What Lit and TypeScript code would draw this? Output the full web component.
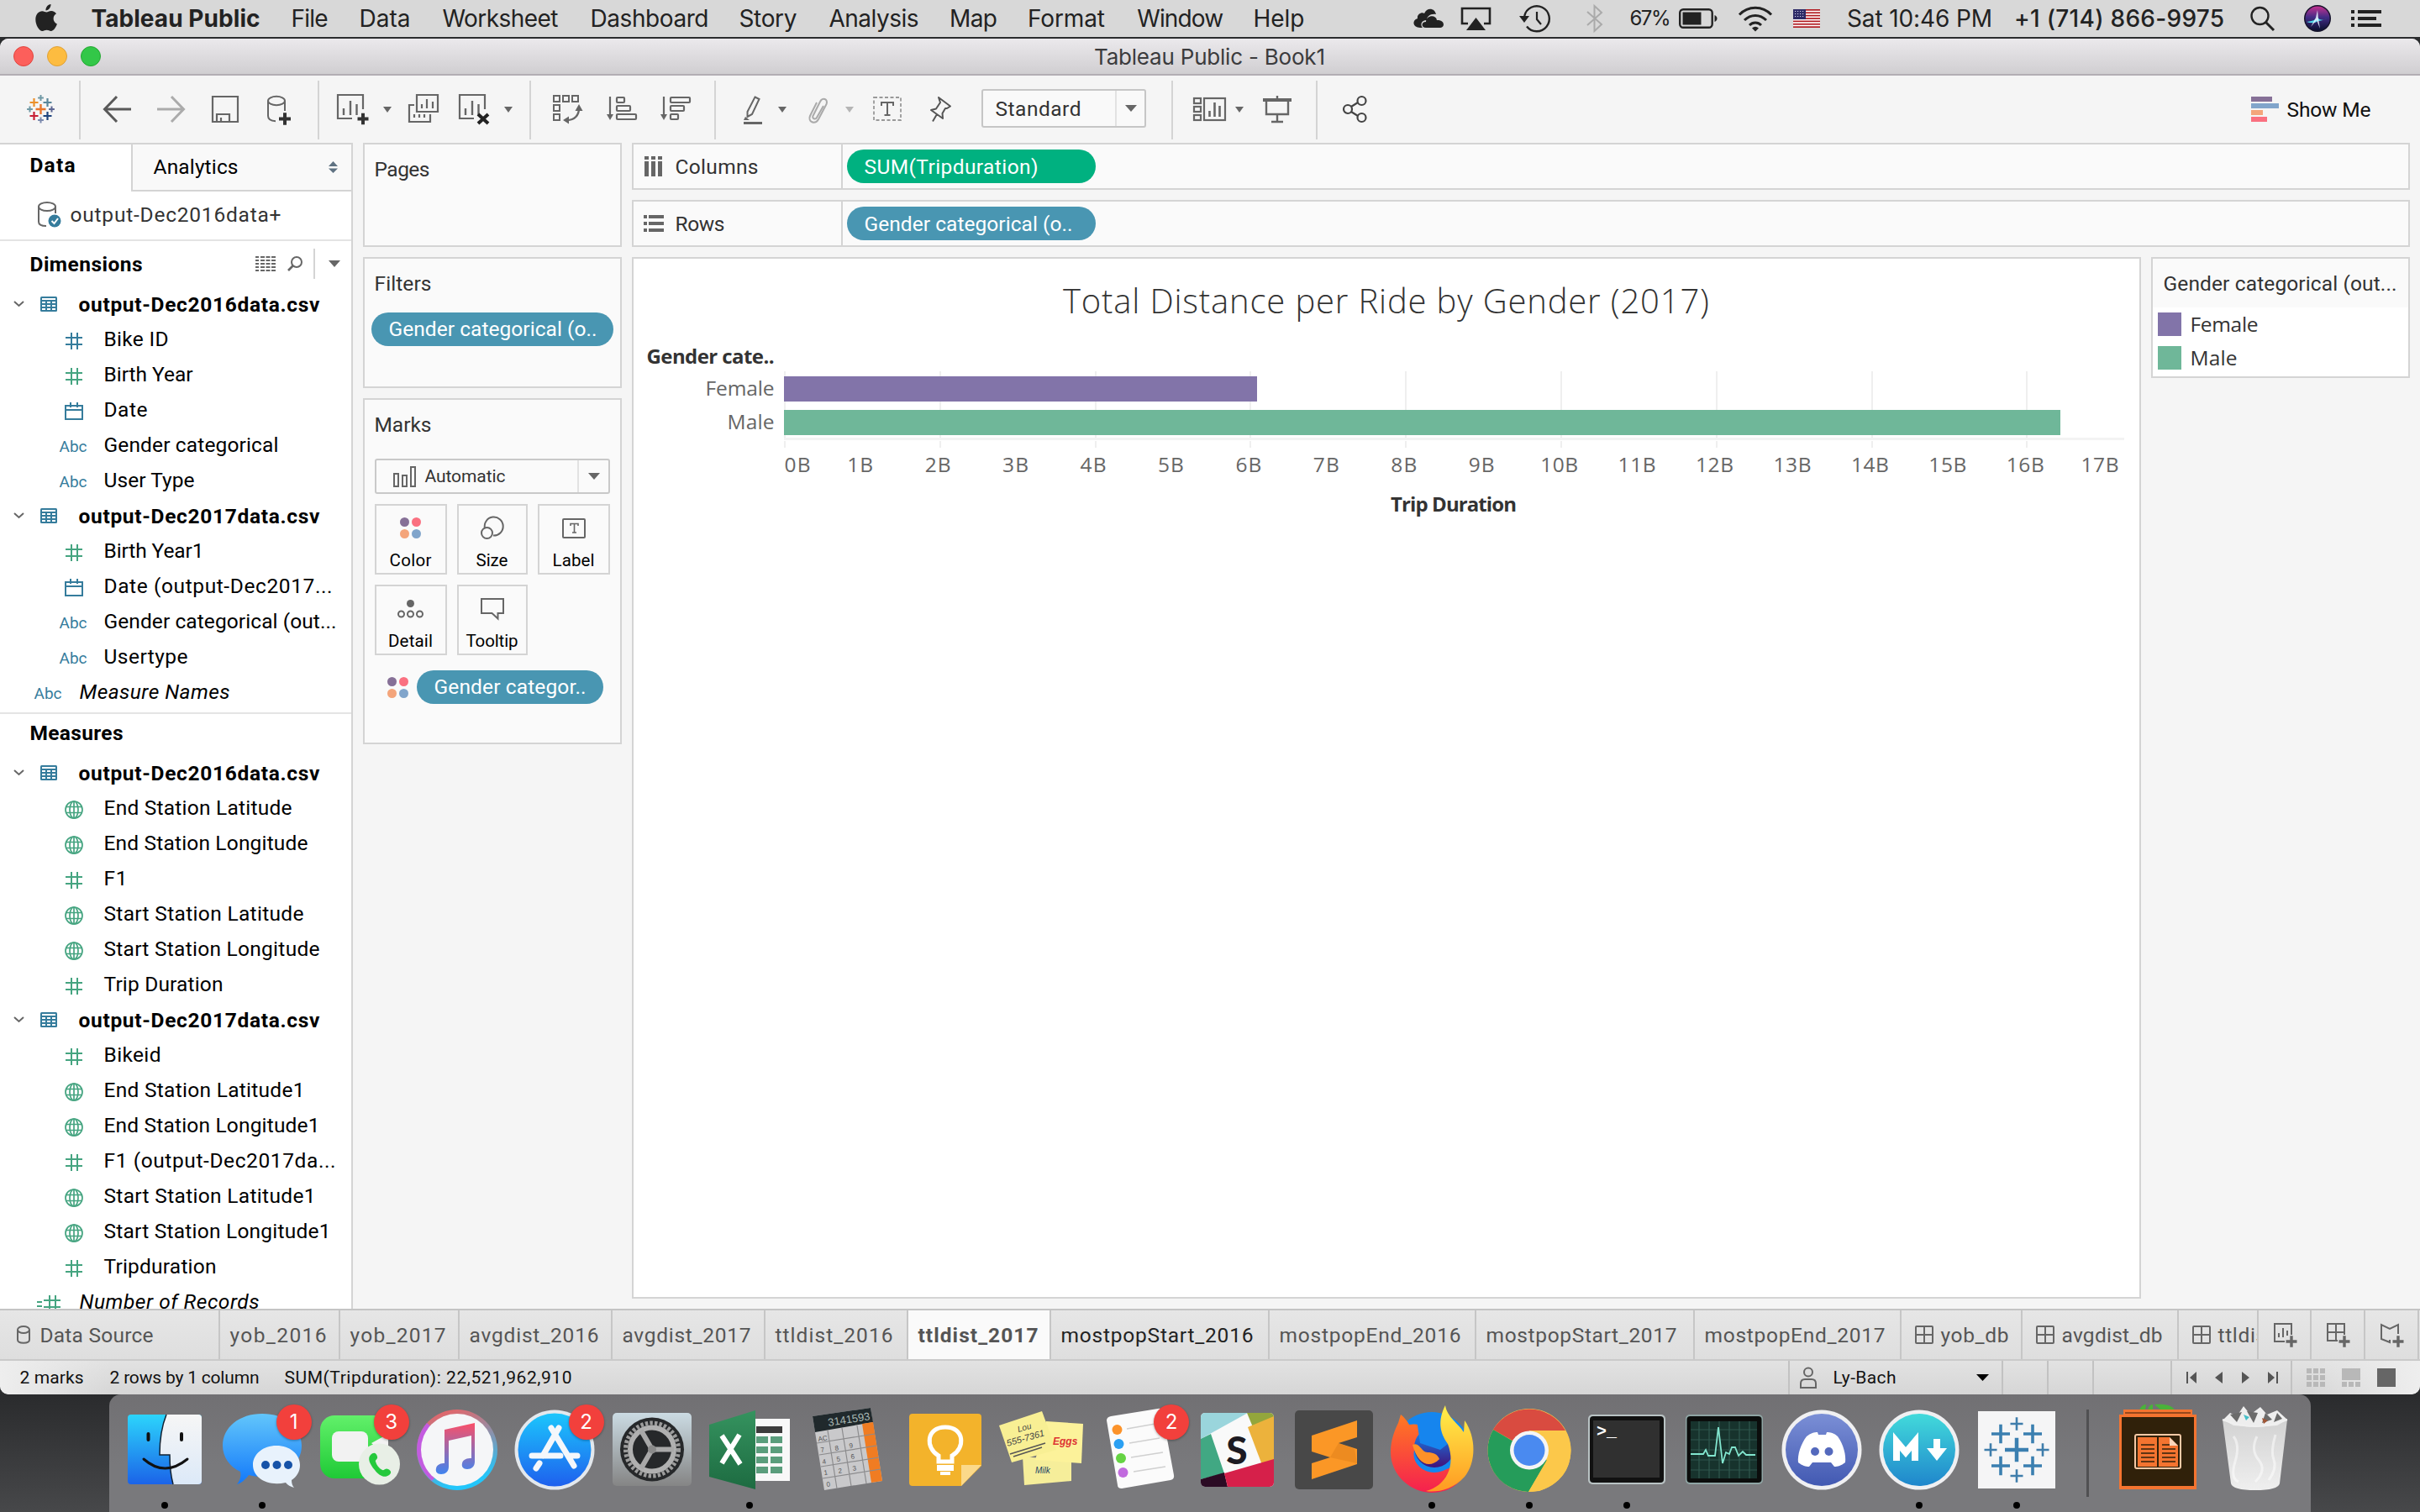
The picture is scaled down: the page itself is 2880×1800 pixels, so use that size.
import { LitElement, html, css, svg, unsafeCSS, nothing } from "lit";
import type { TemplateResult, SVGTemplateResult } from "lit";
import { customElement, property } from "lit/decorators.js";
import { classMap } from "lit/directives/class-map.js";
import { styleMap } from "lit/directives/style-map.js";

/** Grid tracks from a list of column starts; the last column takes the rest. */
const tracks = (...starts: number[]) =>
  unsafeCSS(
    starts
      .slice(1)
      .map((s, i) => `${+(s - starts[i]).toFixed(1)}px`)
      .join(" ") + " 1fr"
  );

/** One line of text, tracked so that it fills a known width. */
@customElement("fit-text")
class FitText extends LitElement {
  @property() text = "";
  @property({ type: Number }) w = 0;
  static styles = css`
    :host { display: inline-block; white-space: pre; margin: 0 0.5px 0 -0.5px; }
    span { display: inline-block; }
  `;
  updated() {
    const span = this.renderRoot.querySelector("span") as HTMLElement;
    span.style.letterSpacing = "0";
    if (!this.w || this.text.length < 2) return;
    const gap = (this.w + 2 - span.getBoundingClientRect().width) / (this.text.length - 1);
    span.style.letterSpacing = `${gap.toFixed(3)}px`;
    span.style.marginRight = `${(-gap).toFixed(3)}px`;
  }
  render() {
    return html`<span>${this.text}</span>`;
  }
}

const t = (text: string, w = 0) => html`<fit-text .text=${text} .w=${w}></fit-text>`;

const ic = (w: number, h: number, body: SVGTemplateResult | SVGTemplateResult[]) =>
  html`<svg width=${w} height=${h} viewBox="0 0 ${w} ${h}">${body}</svg>`;

const caret = (w: number, h: number, fill = "#666") =>
  ic(w, h, svg`<path d="M0 0H${w}L${w / 2} ${h}Z" fill=${fill}/>`);

const base = css`
  :host { display: block; box-sizing: border-box; }
  * { box-sizing: border-box; }
  svg { display: block; overflow: visible; flex: none; }
`;

/* ---------------------------------------------------------------- menu bar */

@customElement("mac-menubar")
class MacMenubar extends LitElement {
  static styles = [
    base,
    css`
      :host {
        height: 44px; background: #d8d8d8; padding-left: 42px; color: #222;
        display: grid; align-items: center;
        grid-template-columns: ${tracks(42, 109, 347, 428, 527, 703, 880, 987, 1130.5, 1223.5, 1353.7, 1492, 1682, 1738, 1808, 1888, 1940, 1998, 2068, 2134, 2198.5, 2397.6, 2678, 2742, 2798)};
        font: 28px/44px Inter, Roboto, sans-serif;
      }
      .app { font-weight: 700; }
      .pct { font-size: 24px; }
      .user { font-weight: 500; }
    `,
  ];
  render() {
    const menus: [string, number][] = [
      ["File", 42], ["Data", 59], ["Worksheet", 136], ["Dashboard", 139], ["Story", 67],
      ["Analysis", 105], ["Map", 55], ["Format", 90], ["Window", 101], ["Help", 59],
    ];
    return html`
      ${ic(26, 36, svg`<path fill="#222" d="M18.5 1c.3 3.300-2.400 7.300-6 7.500C12 5 15 1.300 18.500 1ZM13.300 10.500c1.600 0 3-1.500 5.800-1.500 2.400 0 4.700 1.400 5.900 3.300-5 3-4.200 10 .9 12.200-1 3.200-4 8.500-7.200 8.500-2 0-2.700-1.200-5.100-1.200S10.300 33 8.500 33C4.500 33 .3 25.500.3 19.200c0-6.400 4-10 7.900-10 2.200 0 3.800 1.300 5.100 1.300Z"/>`)}
      <span class="app">${t("Tableau Public", 199)}</span>
      ${menus.map(([m, w]) => html`<span>${t(m, w)}</span>`)}
      ${ic(36, 24, svg`<path fill="#222" d="M8 23c-9 0-10-9-3-11C4 6 11 4 13 6c3-7 12-7 14 1-7-1-11 3-11 7-7 0-8 6-5 9Z"/><path fill="#222" d="M15 23c-6 0-6-7 0-7 0-8 12-9 13-2 9-1 11 9 3 9Z"/>`)}
      ${ic(37, 30, svg`<path d="M9 21H2V3h33v18h-7" fill="none" stroke="#222" stroke-width="2.600"/><path d="M18.500 14 30 29H7Z" fill="#222"/>`)}
      ${ic(38, 34, svg`<path d="M6.200 14A15 15 0 1 1 9 26.500" fill="none" stroke="#222" stroke-width="2.400"/><path d="M0 14h12l-6 8Z" fill="#222"/><path d="M21 9v9l5 6" fill="none" stroke="#222" stroke-width="2.200"/>`)}
      ${ic(20, 32, svg`<path d="M1 8l17 15-8.500 8V1L18 9 1 24" fill="none" stroke="#aaa" stroke-width="2"/>`)}
      <span class="pct">${t("67%", 47)}</span>
      ${ic(47, 24, svg`<rect x="1.200" y="1.200" width="38.500" height="21.500" rx="4" fill="none" stroke="#222" stroke-width="2.400"/><rect x="4.500" y="4.500" width="22" height="15" fill="#222"/><path d="M42.500 8c4 1.500 4 6.500 0 8Z" fill="#222"/>`)}
      ${ic(42, 30, svg`<g fill="none" stroke="#222" stroke-width="3"><path d="M2 10.500c10.500-11 27.500-11 38 0"/><path d="M8 17c7.500-7.500 18.500-7.500 26 0"/><path d="M14 23c4-4 10-4 14 0"/></g><path d="M17 26.500q4-3.500 8 0l-4 4Z" fill="#222"/>`)}
      ${ic(32, 22, svg`<rect width="32" height="22" fill="#fff"/>${[0, 1, 2, 3, 4, 5, 6].map((i) => svg`<rect y=${i * 3.38} width="32" height="1.700" fill="#b01a20"/>`)}<rect width="15" height="12" fill="#2c2a66"/>${[2, 5, 8].map((y) => svg`<path d="M2 ${y + 0.5}H14" stroke="#cfd0e8" stroke-width="1.200" stroke-dasharray="1.200 1.800"/>`)}`)}
      <span>${t("Sat 10:46 PM", 171)}</span>
      <span class="user">${t("+1 (714) 866-9975", 248)}</span>
      ${ic(30, 30, svg`<circle cx="11.500" cy="12" r="10" fill="none" stroke="#222" stroke-width="2.400"/><path d="M18.500 19.500 28 29" stroke="#222" stroke-width="3"/>`)}
      ${ic(32, 32, svg`<defs><linearGradient id="si" x1="0" y1="0" x2="0" y2="1"><stop offset="0" stop-color="#c4318f"/><stop offset=".45" stop-color="#432c86"/><stop offset="1" stop-color="#0a1030"/></linearGradient></defs><circle cx="16" cy="16" r="16" fill="#15122a"/><circle cx="16" cy="16" r="14.500" fill="url(#si)"/><path d="M3 20q10-1 13-5 4 5 12 1-8 3-11 3-6 4-14 1Z" fill="#4fd8ea"/><path d="M16 6l1 10 2 12-4-10-7 8 6-11Z" fill="#e9f6ff" opacity=".85"/>`)}
      ${ic(36, 20, svg`<g fill="#222"><path d="M0 0h4v4H0zM8 0h28v4H8zM0 8h4v4H0zM8 8h22v4H8zM0 16h4v4H0zM8 16h28v4H8z"/></g>`)}
    `;
  }
}

/* ----------------------------------------------------------------- toolbar */

const plus = (x: number, y: number, s: number, c: string, k = 2) =>
  svg`<path d="M${x - s} ${y}h${2 * s}M${x} ${y - s * 1.02}v${2 * s * 1.02}" stroke=${c} stroke-width=${k} fill="none"/>`;

const sheet = svg`<path d="M31 18V1H1v28h17" fill="none" stroke="#666" stroke-width="2.200"/><path d="M8 25v-8M16 25V8M23.500 25v-13" stroke="#666" stroke-width="2.400"/>`;

@customElement("tool-bar")
class ToolBar extends LitElement {
  static styles = [
    base,
    css`
      :host {
        height: 80px; background: #f5f5f5; padding-left: 32px;
        display: grid; align-items: center;
        grid-template-columns: ${tracks(32, 94, 122, 187, 252, 318, 378, 401, 456, 486, 546, 600, 630, 658, 722, 786, 850, 885, 926, 961, 1006, 1039, 1106, 1168, 1394, 1420, 1470, 1503, 1566, 1598, 2679)};
        font: 24.500px Roboto, sans-serif; color: #333;
      }
      .sep { width: 2px; height: 70px; background: #d4d4d4; margin-top: 2px; }
      .select { width: 196px; height: 46px; border: 2px solid #c6c6c6; border-radius: 3px; background: #f9f9f9; display: flex; align-items: center; justify-content: space-between; padding-left: 15px; margin-top: -2px; }
      .arrow { width: 35px; height: 42px; border-left: 2px solid #e2e2e2; display: grid; place-items: center; }
      .show { display: flex; align-items: center; gap: 10px; color: #111; }
    `,
  ];
  render() {
    const sep = html`<i class="sep"></i>`;
    const c = caret(10, 7);
    return html`
      ${ic(33, 36, [
        plus(16.5, 18, 6, "#e8762c", 2.4), plus(8.5, 10, 5, "#eb912c", 2.2), plus(24.5, 10, 5, "#59879b", 2.2),
        plus(8.5, 26, 5, "#c72035", 2.2), plus(24.5, 26, 5, "#1f457e", 2.2), plus(16.5, 4.5, 3.4, "#7099a5"),
        plus(16.5, 31, 3.4, "#7b89ad"), plus(3.5, 18, 3.4, "#7099a5"), plus(29.5, 18, 3.4, "#5c6692"),
      ])}
      ${sep}
      ${ic(34, 36, svg`<path d="M17 3 2.500 18 17 33M3 18h31" fill="none" stroke="#595959" stroke-width="3"/>`)}
      ${ic(34, 36, svg`<path d="M17 3 31.500 18 17 33M0 18h31" fill="none" stroke="#ababab" stroke-width="3"/>`)}
      ${ic(32, 36, svg`<path d="M1 3h30v30H1Z M6 33V24h15v9M11 33v-5" fill="none" stroke="#666" stroke-width="2.200"/>`)}
      ${ic(28, 36, svg`<g fill="none" stroke="#666" stroke-width="2"><ellipse cx="11" cy="8" rx="10" ry="5.200"/><path d="M1 8v18c0 4 4 6 9 6.300M21 8v12"/></g>${plus(21, 29.500, 7, "#333", 4)}`)}
      ${sep}
      ${ic(38, 36, svg`${sheet}${plus(31, 29.500, 6.500, "#333", 4)}`)}
      ${c}
      ${ic(37, 36, svg`<g fill="none" stroke="#666" stroke-width="2.200"><path d="M10 1h25v20H10zM7 13H1v20h25v-9"/><path d="M16 17v-5M22 17V6M29 17V9M7 28v-4M13 28v-4M19 28v-4"/></g>`)}
      ${ic(38, 36, svg`${sheet}<path d="M23 24l12 11M35 24 23 35" stroke="#222" stroke-width="4"/>`)}
      ${c}
      ${sep}
      ${ic(35, 36, svg`<g fill="none" stroke="#666" stroke-width="2"><rect x="1" y="2" width="7" height="7"/><rect x="12" y="2" width="7" height="7"/><rect x="23" y="2" width="7" height="7"/><rect x="1" y="13" width="7" height="7"/><rect x="1" y="24" width="7" height="7"/><path d="M17 31c9 0 14-6 14-14" stroke-width="2.400"/></g><path d="M31 12l4.500 8h-9zM12 31l7-4.500v9z" fill="#666"/>`)}
      ${ic(36, 36, svg`<g fill="none" stroke="#666" stroke-width="2.200"><path d="M4 3v24"/><rect x="12" y="4" width="9" height="6" rx="1"/><rect x="12" y="14" width="16" height="6" rx="1"/><rect x="12" y="24" width="23" height="6" rx="1"/></g><path d="M0 24h8l-4 7z" fill="#666"/>`)}
      ${ic(36, 36, svg`<g fill="none" stroke="#666" stroke-width="2.200"><path d="M4 3v24"/><rect x="12" y="4" width="23" height="6" rx="1"/><rect x="12" y="14" width="16" height="6" rx="1"/><rect x="12" y="24" width="9" height="6" rx="1"/></g><path d="M0 24h8l-4 7z" fill="#666"/>`)}
      ${sep}
      ${ic(22, 36, svg`<path d="M13.500 3.500 18.500 6 10 24l-5.500 3V21Z" fill="none" stroke="#666" stroke-width="2"/><path d="M2 27l5 4H0z" fill="#666"/><path d="M0 34.500h22" stroke="#666" stroke-width="3"/>`)}
      ${c}
      ${ic(24, 36, svg`<path d="M19 13 11 27c-1.500 3-6 1-4.500-2L15 8c2.500-6 10-3 7.500 3L13 29c-4 7-13 3-10-4L11 9" fill="none" stroke="#aaa" stroke-width="2" transform="translate(0 1)"/>`)}
      ${caret(10, 7, "#b5b5b5")}
      ${ic(34, 36, svg`<rect x="1" y="4" width="32" height="27" fill="none" stroke="#999" stroke-width="1.800" stroke-dasharray="4 2.500"/><path d="M10 14v-4h14v4M17 10v15M13.500 25h7" fill="none" stroke="#666" stroke-width="2"/>`)}
      ${ic(26, 36, svg`<path d="M11 4 25 14.500 21 17l-2 0-3.500 6 .5 6L2 19l6-1.500 5-7.500ZM9 24 4 32.500" fill="none" stroke="#555" stroke-width="2" stroke-linejoin="round"/>`)}
      <div class="select">${t("Standard", 100)}<span class="arrow">${caret(14, 8)}</span></div>
      ${sep}
      ${ic(39, 36, svg`<g fill="none" stroke="#666" stroke-width="2.200"><rect x="1" y="5" width="8" height="6"/><rect x="1" y="15" width="8" height="6"/><rect x="1" y="25" width="8" height="6"/><rect x="13" y="5" width="25" height="26"/><path d="M19.500 27v-7M25.500 27V10M31.500 27V14" stroke-width="2.600"/></g>`)}
      ${c}
      ${ic(34, 36, svg`<path d="M0 5h34v4H0z" fill="#666"/><path d="M4 8v16h26V8M17 2v3M17 24v9M10 33h14" fill="none" stroke="#666" stroke-width="2.400"/>`)}
      ${sep}
      ${ic(29, 36, svg`<g fill="none" stroke="#444" stroke-width="2.200"><circle cx="6" cy="18" r="5"/><circle cx="22.500" cy="8" r="5"/><circle cx="22.500" cy="28" r="5"/><path d="M10 15l8-5M10 21l8 5"/></g>`)}
      <div class="show">
        ${ic(33, 30, svg`<path d="M0 0h25v6H0z" fill="#867097"/><path d="M0 8h33v6H0z" fill="#81a5cb"/><path d="M0 16h14v6H0z" fill="#f4a57b"/><path d="M0 24h19v6H0z" fill="#fa7080"/>`)}
        ${t("Show Me", 98)}
      </div>
    `;
  }
}

/* --------------------------------------------------------------- data pane */

type Kind = "dim" | "num" | "date" | "abc" | "geo" | "calc" | "table";
interface Field { kind: Kind; name: string; w: number; top?: boolean }
const f = (kind: Kind, name: string, w: number, top = false): Field => ({ kind, name, w, top });

const dimensions: Field[] = [
  f("table", "output-Dec2016data.csv", 285), f("dim", "Bike ID", 75), f("num", "Birth Year", 104),
  f("date", "Date", 50), f("abc", "Gender categorical", 206), f("abc", "User Type", 106),
  f("table", "output-Dec2017data.csv", 285), f("num", "Birth Year1", 117),
  f("date", "Date (output-Dec2017...", 270), f("abc", "Gender categorical (out...", 275),
  f("abc", "Usertype", 98), f("abc", "Measure Names", 177, true),
];
const measures: Field[] = [
  f("table", "output-Dec2016data.csv", 285), f("geo", "End Station Latitude", 222),
  f("geo", "End Station Longitude", 241), f("num", "F1", 26), f("geo", "Start Station Latitude", 236),
  f("geo", "Start Station Longitude", 255), f("num", "Trip Duration", 140),
  f("table", "output-Dec2017data.csv", 285), f("num", "Bikeid", 66), f("geo", "End Station Latitude1", 237),
  f("geo", "End Station Longitude1", 255), f("num", "F1 (output-Dec2017da...", 274),
  f("geo", "Start Station Latitude1", 250), f("geo", "Start Station Longitude1", 268),
  f("num", "Tripduration", 132), f("calc", "Number of Records", 212, true),
];

const hash = (c: string) => svg`<path d="M0 6h20M0 14h20M7 0v20M14 0v20" fill="none" stroke=${c} stroke-width="2"/>`;
const fieldIcon = (k: Kind): TemplateResult => {
  const blue = "#357c9c", green = "#45a480";
  if (k === "dim") return ic(20, 20, hash(blue));
  if (k === "num") return ic(20, 20, hash(green));
  if (k === "calc") return ic(28, 20, svg`<path d="M0 8h6M0 13h6" stroke=${green} stroke-width="2"/><g transform="translate(8 0)">${hash(green)}</g>`);
  if (k === "date") return ic(22, 21, svg`<path d="M1 4h20v16H1ZM1 9h20M7 0v6M15 0v6" fill="none" stroke=${blue} stroke-width="2"/>`);
  if (k === "geo") return ic(22, 22, svg`<g fill="none" stroke=${green} stroke-width="1.700"><circle cx="11" cy="11" r="10"/><ellipse cx="11" cy="11" rx="5" ry="10"/><path d="M1.500 7.500h19M1.500 14.500h19M11 1v20"/></g>`);
  if (k === "table") return ic(20, 18, svg`<rect width="20" height="18" rx="1.500" fill=${blue}/><g fill="#fff"><path d="M2 2h16v2H2z"/>${[6, 10, 14].map((y) => svg`<path d="M2 ${y}h4v2H2zM8 ${y}h4v2H8zM14 ${y}h4v2h-4z"/>`)}</g>`);
  return html`<span class="abc">${t("Abc", 31)}</span>`;
};

@customElement("data-pane")
class DataPane extends LitElement {
  static styles = [
    base,
    css`
      :host { width: 420px; height: 1388px; overflow: hidden; border-right: 2px solid #d4d4d4; border-top: 2px solid #d4d4d4; background: #fff; font: 24.500px Roboto, sans-serif; color: #000; }
      .tabs { display: flex; height: 56px; }
      .tab { width: 156px; padding: 10px 0 0 36px; font-weight: 700; }
      .tab.off { flex: 1; font-weight: 400; background: #f9f9f9; border-left: 2px solid #d4d4d4; border-bottom: 2px solid #d4d4d4; padding: 0 16px 1px 25px; display: flex; align-items: center; justify-content: space-between; }
      .source { height: 59px; display: flex; align-items: center; padding-left: 45px; gap: 11px; color: #333; border-bottom: 2px solid #e4e4e4; padding-bottom: 3px; }
      .head { height: 54px; display: flex; align-items: center; padding: 0 13px 0 36px; font-weight: 700; }
      .tools { margin-left: auto; display: flex; align-items: center; gap: 14px; }
      .bar { width: 2px; height: 36px; background: #d4d4d4; margin: 0 2px 0 -1px; }
      .rule { height: 2px; background: #e4e4e4; margin-top: 3px; }
      .head.low { height: 49px; padding-bottom: 4px; }
      .row { height: 42px; display: grid; grid-template-columns: 124px 1fr; align-items: center; }
      .row.table { grid-template-columns: 16px 32px 46px 1fr; font-weight: 700; }
      .row.top { grid-template-columns: 95px 1fr; font-style: italic; }
      .glyph { display: flex; justify-content: center; padding-left: 51px; padding-top: 3px; }
      .row.top .glyph { padding-left: 20px; font-style: normal; }
      .abc { font-size: 19px; color: #357c9c; line-height: 20px; }
      .row > fit-text { padding-bottom: 1px; }
      .row.table > fit-text { padding-bottom: 0; }
    `,
  ];
  private row = (x: Field) =>
    x.kind === "table"
      ? html`<div class="row table"><span></span>${ic(13, 8, svg`<path d="M1 1l5.500 5L12 1" fill="none" stroke="#666" stroke-width="2"/>`)}${fieldIcon("table")}${t(x.name, x.w)}</div>`
      : html`<div class=${classMap({ row: true, top: !!x.top })}><span class="glyph">${fieldIcon(x.kind)}</span>${t(x.name, x.w)}</div>`;
  render() {
    return html`
      <div class="tabs">
        <div class="tab">${t("Data", 52)}</div>
        <div class="tab off">${t("Analytics", 99)}${ic(11, 14, svg`<path d="M0 6 5.500 0 11 6zM0 8.500h11L5.500 14z" fill="#5f7282"/>`)}</div>
      </div>
      <div class="source">
        ${ic(28, 30, svg`<g fill="none" stroke="#666" stroke-width="2"><ellipse cx="11" cy="6" rx="10" ry="5"/><path d="M1 6v18c0 4 4 5 9 5M21 6v8"/></g><circle cx="20" cy="23" r="7.500" fill="#357c9c"/><path d="M16.500 23l3 3 4.500-6" fill="none" stroke="#fff" stroke-width="2"/>`)}
        ${t("output-Dec2016data+", 249)}
      </div>
      <div class="head">
        ${t("Dimensions", 132)}
        <span class="tools">
          ${ic(24, 18, [1, 5, 9, 13, 17].map((y) => svg`<path d="M0 ${y}h4M6 ${y}h5M12.500 ${y}h5M19 ${y}h5" stroke="#666" stroke-width="1.900"/>`))}
          ${ic(18, 18, svg`<circle cx="11" cy="7" r="6" fill="none" stroke="#666" stroke-width="2"/><path d="M7 11l-6 6" stroke="#666" stroke-width="2.600"/>`)}
          <i class="bar"></i>${caret(14, 8)}
        </span>
      </div>
      ${dimensions.map(this.row)}
      <div class="rule"></div>
      <div class="head low">${t("Measures", 109)}</div>
      ${measures.map(this.row)}
    `;
  }
}

/* ------------------------------------------------------------ marks column */

const dots = svg`<circle cx="5.500" cy="5.500" r="5.500" fill="#867097"/><circle cx="19.500" cy="5.500" r="5.500" fill="#fa7080"/><circle cx="5.500" cy="19.500" r="5.500" fill="#f4a57b"/><circle cx="19.500" cy="19.500" r="5.500" fill="#81a5cb"/>`;

@customElement("mark-cards")
class MarkCards extends LitElement {
  static styles = [
    base,
    css`
      :host { width: 308px; display: flex; flex-direction: column; gap: 12px; font: 24.500px Roboto, sans-serif; color: #333; }
      .card { border: 2px solid #d4d4d4; background: #fafafa; }
      .title { height: 60px; line-height: 60px; padding-left: 12px; }
      .pages { height: 124px; }
      .filters { height: 156px; }
      .marks { height: 412px; }
      .pill { height: 40px; border-radius: 20px; background: #4996b2; color: #fff; display: flex; align-items: center; padding-left: 21px; line-height: 38px; }
      .filters .pill { margin: 4px 8px 0; }
      .select { margin: 10px 12px 12px; height: 42px; border: 2px solid #c9c9c9; border-radius: 3px; display: flex; align-items: center; padding-left: 20px; gap: 11px; font-size: 21px; }
      .arrow { margin-left: auto; width: 37px; height: 38px; border-left: 2px solid #e2e2e2; display: grid; place-items: center; }
      .grid { display: grid; grid-template-columns: 86px 84px 86px; gap: 12px; margin-left: 12px; }
      .btn { height: 84px; border: 2px solid #d4d4d4; display: flex; flex-direction: column; align-items: center; font-size: 20.500px; color: #000; }
      .pic { height: 53px; display: grid; place-items: center; margin-left: -1px; }
      .btn fit-text { line-height: 24px; }
      .enc { display: flex; align-items: center; gap: 10px; margin: 18px 0 0 27px; }
      .enc .pill { width: 222px; }
    `,
  ];
  render() {
    const g = (b: SVGTemplateResult) => svg`<g fill="none" stroke="#666" stroke-width="2">${b}</g>`;
    const btn = (p: TemplateResult, label: string, w: number) => html`<div class="btn"><span class="pic">${p}</span>${t(label, w)}</div>`;
    return html`
      <section class="card pages"><div class="title">${t("Pages", 64)}</div></section>
      <section class="card filters">
        <div class="title">${t("Filters", 66)}</div>
        <div class="pill">${t("Gender categorical (o..", 246)}</div>
      </section>
      <section class="card marks">
        <div class="title">${t("Marks", 66)}</div>
        <div class="select">
          ${ic(27, 25, g(svg`<rect x="1" y="9" width="5" height="15"/><rect x="11" y="11" width="5" height="13"/><rect x="21" y="1" width="5" height="23"/>`))}
          ${t("Automatic", 94)}<span class="arrow">${caret(14, 8)}</span>
        </div>
        <div class="grid">
          ${btn(ic(25, 25, dots), "Color", 48)}
          ${btn(ic(28, 27, g(svg`<path d="M5 14A11 11 0 1 1 15 22.500"/><circle cx="7.500" cy="19.500" r="6.500"/>`)), "Size", 36)}
          ${btn(ic(28, 24, svg`${g(svg`<rect x="1" y="1" width="26" height="22" rx="1"/>`)}<path d="M10 9V6.500h9V9M14.500 6.500V17M12 17h5" fill="none" stroke="#666" stroke-width="1.600"/>`), "Label", 48)}
          ${btn(ic(31, 22, svg`<circle cx="15.500" cy="4.500" r="4.500" fill="#666"/>${g(svg`<circle cx="4.500" cy="17" r="3.500"/><circle cx="15.500" cy="17" r="3.500"/><circle cx="26.500" cy="17" r="3.500"/>`)}`), "Detail", 51)}
          ${btn(ic(28, 26, g(svg`<path d="M1 1h26v17h-6.500v6.500L13.500 18H1Z"/>`)), "Tooltip", 60)}
        </div>
        <div class="enc">${ic(25, 25, dots)}<div class="pill">${t("Gender categor..", 179)}</div></div>
      </section>
    `;
  }
}

/* -------------------------------------------------------------- worksheet */

@customElement("work-sheet")
class WorkSheet extends LitElement {
  static styles = [
    base,
    css`
      :host { width: 2116px; display: flex; flex-direction: column; gap: 12px; font: 24.500px Roboto, sans-serif; color: #333; }
      .shelf { height: 56px; border: 2px solid #d4d4d4; background: #fafafa; display: flex; align-items: center; }
      .name { width: 249px; height: 52px; border-right: 2px solid #d4d4d4; display: grid; grid-template-columns: 38px 1fr; align-items: center; padding-left: 12px; }
      .pill { width: 296px; height: 40px; border-radius: 20px; margin-left: 5px; background: #4996b2; color: #fff; display: flex; align-items: center; padding-left: 21px; }
      .pill.green { background: #00b180; }
      .main { display: flex; gap: 12px; align-items: flex-start; }
      .viz { width: 1796px; height: 1240px; border: 2px solid #d4d4d4; background: #fff; font-family: "Open Sans", "Noto Sans", sans-serif; color: #333; }
      h1 { margin: 18px 0 0; height: 62px; line-height: 63px; font-size: 40px; font-weight: 300; text-align: center; }
      .field { width: 168px; margin-top: 18px; height: 36px; line-height: 36px; font-weight: 700; font-size: 24px; text-align: right; }
      .plot { display: grid; grid-template-columns: 168px 11px 1595px; }
      .cats { display: flex; flex-direction: column; text-align: right; color: #666; }
      .cats span { height: 40px; line-height: 40px; }
      .area { grid-column: 3; height: 82px; border-bottom: 3px solid #f3f3f3; display: flex; flex-direction: column; gap: 10px; padding-top: 6px; background: repeating-linear-gradient(90deg, #efefef 0 2px, transparent 2px 184.800px); }
      .bar { height: 30px; background: #8274a9; }
      .bar.male { background: #6fb799; }
      .ticks { grid-column: 3; height: 8px; margin-top: 1px; background: repeating-linear-gradient(90deg, #efefef 0 2px, transparent 2px 184.800px); }
      .axis { grid-column: 3; margin-top: 6px; height: 28px; line-height: 27px; display: grid; grid-template-columns: 45px repeat(16, 92.450px) 71px; color: #666; white-space: nowrap; }
      .axis span { text-align: center; }
      .axis span:first-child { text-align: left; padding-left: 1px; }
      .axis span:last-child { text-align: right; padding-right: 6px; }
      .label { grid-column: 3; margin-top: 17px; font-weight: 700; font-size: 24px; text-align: center; line-height: 32px; }
      .legend { width: 308px; height: 144px; border: 2px solid #d4d4d4; background: #fff; }
      .cap { height: 58px; line-height: 59px; padding-left: 13px; background: #fafafa; }
      .key { height: 40px; display: flex; align-items: center; gap: 11px; padding-left: 6px; font-family: "Open Sans", "Noto Sans", sans-serif; line-height: 38px; }
      .sw { width: 28px; height: 28px; background: #8274a9; }
      .sw.male { background: #6fb799; }
    `,
  ];
  private bars = [
    { name: "Female", value: 6.09, w: 80, lw: 79 },
    { name: "Male", value: 16.43, w: 54, lw: 54 },
  ];
  render() {
    const perBillion = 92.45;
    return html`
      <div class="shelf">
        <div class="name">${ic(24, 24, svg`<g fill="#666"><path d="M1 0h5v4H1zM9 0h5v4H9zM17 0h5v4h-5zM1 6h5v18H1zM9 6h5v18H9zM17 6h5v18h-5z"/></g>`)}${t("Columns", 97)}</div>
        <div class="pill green">${t("SUM(Tripduration)", 205)}</div>
      </div>
      <div class="shelf">
        <div class="name">${ic(24, 20, svg`<g fill="#666"><path d="M0 0h4v4H0zM6 0h18v4H6zM0 8h4v4H0zM6 8h18v4H6zM0 16h4v4H0zM6 16h18v4H6z"/></g>`)}${t("Rows", 57)}</div>
        <div class="pill">${t("Gender categorical (o..", 246)}</div>
      </div>
      <div class="main">
        <div class="viz">
          <h1>${t("Total Distance per Ride by Gender (2017)", 767)}</h1>
          <div class="field">${t("Gender cate..", 150)}</div>
          <div class="plot">
            <div class="cats">${this.bars.map((b) => html`<span>${t(b.name, b.w)}</span>`)}</div>
            <div class="area">
              ${this.bars.map((b, i) => html`<div class=${classMap({ bar: true, male: i === 1 })} style=${styleMap({ width: `${(b.value * perBillion).toFixed(0)}px` })}></div>`)}
            </div>
            <div class="ticks"></div>
            <div class="axis">${Array.from({ length: 18 }, (_, i) => html`<span>${t(`${i}B`, i < 10 ? 29 : 43)}</span>`)}</div>
            <div class="label">${t("Trip Duration", 148)}</div>
          </div>
        </div>
        <div class="legend">
          <div class="cap">${t("Gender categorical (out...", 276)}</div>
          ${this.bars.map((b, i) => html`<div class="key"><i class=${classMap({ sw: true, male: i === 1 })}></i>${t(b.name, b.lw)}</div>`)}
        </div>
      </div>
    `;
  }
}

/* ------------------------------------------------- sheet tabs / status bar */

interface Tab { name: string; w: number; size: number; cls?: string; db?: boolean }

@customElement("sheet-tabs")
class SheetTabs extends LitElement {
  static styles = [
    base,
    css`
      :host { font: 24.500px Roboto, sans-serif; color: #555; }
      .strip { height: 62px; border-top: 2px solid #c4c4c4; border-bottom: 2px solid #cacaca; background: linear-gradient(#e6e6e6, #dedede); display: flex; }
      .tab { height: 58px; border-right: 2px solid #c6c6c6; display: flex; align-items: center; gap: 9px; padding-left: 12px; overflow: hidden; flex: none; }
      .tab.src { padding-left: 20px; gap: 12px; }
      .tab.on { background: #fafafa; font-weight: 700; }
      .tab.dark { color: #222; }
      .tab.db { padding-left: 16px; }
      .tab.new { padding-left: 18px; }
      .status { height: 40px; background: linear-gradient(90deg, #eee, #eee0 130px calc(100% - 130px), #eee), linear-gradient(#e2e2e2, #d6d6d6); border-radius: 0 0 10px 10px; display: grid; align-items: center; padding-left: 24px; color: #111; font-size: 21px;
        grid-template-columns: ${tracks(24, 131, 339, 2128, 2382, 2436, 2490, 2583, 2726)}; }
      .cell { height: 40px; border-left: 2px solid #c2c2c2; display: flex; align-items: center; }
      .user { padding-left: 12px; gap: 20px; }
      .user svg:last-child { margin-left: auto; margin-right: 15px; }
      .nav { padding-left: 17px; gap: 21px; }
      .views { padding-left: 17px; gap: 20px; }
    `,
  ];
  private tabs: Tab[] = [
    { name: "yob_2016", w: 113, size: 143 }, { name: "yob_2017", w: 112, size: 142 },
    { name: "avgdist_2016", w: 152, size: 182 }, { name: "avgdist_2017", w: 151, size: 182 },
    { name: "ttldist_2016", w: 138, size: 170 }, { name: "ttldist_2017", w: 141, size: 170, cls: "on" },
    { name: "mostpopStart_2016", w: 227, size: 260, cls: "dark" }, { name: "mostpopEnd_2016", w: 214, size: 246 },
    { name: "mostpopStart_2017", w: 225, size: 260 }, { name: "mostpopEnd_2017", w: 213, size: 246 },
    { name: "yob_db", w: 79, size: 144, db: true }, { name: "avgdist_db", w: 118, size: 186, db: true },
    { name: "ttldist_db", w: 105, size: 95, db: true },
  ];
  render() {
    const g = (b: SVGTemplateResult) => svg`<g fill="none" stroke="#666" stroke-width="2">${b}</g>`;
    const size = (px: number) => styleMap({ width: `${px}px` });
    const win = g(svg`<rect x="1" y="1" width="20" height="20" rx="1"/><path d="M11 1v20M1 11h20"/>`);
    const pl = plus(21, 22, 6.5, "#666", 3.4);
    return html`
      <div class="strip">
        <div class="tab src" style=${size(262)}>
          ${ic(16, 22, g(svg`<ellipse cx="8" cy="5" rx="7" ry="4"/><path d="M1 5v12c0 5 14 5 14 0V5"/>`))}${t("Data Source", 133)}
        </div>
        ${this.tabs.map((x) => html`<div class=${classMap({ tab: true, db: !!x.db, [x.cls ?? "plain"]: true })} style=${size(x.size)}>${x.db ? ic(22, 22, win) : nothing}${t(x.name, x.w)}</div>`)}
        <div class="tab new" style=${size(63)}>${ic(28, 29, svg`${g(svg`<path d="M13 22H1V1h20v13M6 17v-5M11 17V6M16 15V9"/>`)}${pl}`)}</div>
        <div class="tab new" style=${size(64)}>${ic(28, 29, svg`${g(svg`<path d="M13 21H1V1h20v13M11 1v20M1 11h20"/>`)}${pl}`)}</div>
        <div class="tab new" style=${size(64)}>${ic(28, 29, svg`${g(svg`<path d="M21 13V2l-10 5L1 2v17l10 4V20"/>`)}${pl}`)}</div>
      </div>
      <div class="status">
        <span>${t("2 marks", 74)}</span><span>${t("2 rows by 1 column", 176)}</span><span>${t("SUM(Tripduration): 22,521,962,910", 340)}</span>
        <div class="cell user">
          ${ic(20, 26, g(svg`<circle cx="10" cy="6.500" r="5"/><path d="M1 25v-5q0-5 5-5h8q5 0 5 5v5Z"/>`))}${t("Ly-Bach", 73)}${caret(15, 8, "#000")}
        </div>
        <div class="cell"></div><div class="cell"></div><div class="cell"></div>
        <div class="cell nav">
          ${ic(13, 14, svg`<path d="M1 0v14" stroke="#555" stroke-width="2"/><path d="M12 0v14L4 7z" fill="#555"/>`)}
          ${ic(10, 14, svg`<path d="M9 0v14L0 7z" fill="#555"/>`)}
          ${ic(10, 14, svg`<path d="M1 0v14l9-7z" fill="#555"/>`)}
          ${ic(13, 14, svg`<path d="M12 0v14" stroke="#555" stroke-width="2"/><path d="M1 0v14l8-7z" fill="#555"/>`)}
        </div>
        <div class="cell views">
          ${ic(22, 22, [0, 8, 16].map((y) => svg`<path d="M0 ${y}h6v6H0zM8 ${y}h6v6H8zM16 ${y}h6v6h-6z" fill="#b8b8b8"/>`))}
          ${ic(22, 22, svg`<path d="M0 0h22v14H0zM0 16h6v6H0zM8 16h6v6H8zM16 16h6v6h-6z" fill="#b8b8b8"/>`)}
          ${ic(22, 22, svg`<path d="M0 0h22v22H0z" fill="#666"/>`)}
        </div>
      </div>
    `;
  }
}

/* -------------------------------------------------------------------- dock */

const grad = (id: string, a: string, b: string, x2 = 0, y2 = 1) =>
  svg`<linearGradient id=${id} x1="0" y1="0" x2=${x2} y2=${y2}><stop offset="0" stop-color=${a}/><stop offset="1" stop-color=${b}/></linearGradient>`;

interface App { art: SVGTemplateResult; badge?: string; run?: boolean }

const apps: App[] = [
  { run: true, art: svg`${grad("fi", "#2cd5fc", "#1b63e8")}${grad("fw", "#f6f6f6", "#dce9f8")}
      <rect x="14" y="24" width="88" height="83" rx="4" fill="url(#fi)"/>
      <path d="M60 24h38q4 0 4 4v75q0 4-4 4H68q-4-15-4-35H52Q52 44 60 24Z" fill="url(#fw)"/>
      <path d="M60 24Q52 44 52 72h12q0 20 4 35" fill="none" stroke="#123" stroke-width="1.500"/>
      <path d="M38.500 47v7M78 47v7" stroke="#111" stroke-width="4" stroke-linecap="round"/><path d="M33 77q25 22 52 0" fill="none" stroke="#111" stroke-width="3" stroke-linecap="round"/>` },
  { run: true, badge: "1", art: svg`${grad("me", "#62c6fb", "#1379fa")}
      <path d="M58 23c27 0 47 16 47 38S85 98 58 98c-6 0-12-1-16-2-4 6-10 10-14 11 4-5 5-10 4-15C19 86 11 74 11 61c0-22 20-38 47-38Z" fill="url(#me)"/>
      <path d="M75 61c16 0 28 10 28 23 0 8-4 14-10 18 0 4 1 7 3 9-4-1-8-3-10-6-22 5-39-6-39-21 0-13 12-23 28-23Z" fill="#e8f2fc"/>
      <g fill="#1653a8"><circle cx="62" cy="84" r="5"/><circle cx="75.500" cy="84" r="5"/><circle cx="89" cy="84" r="5"/></g>` },
  { badge: "3", art: svg`${grad("ft", "#62f06a", "#1fca36")}
      <rect x="11" y="25" width="81" height="75" rx="17" fill="url(#ft)"/><rect x="25" y="44" width="43" height="36" rx="8" fill="#f2f2f2"/><path d="M72 58 92 47v30Z" fill="#f2f2f2"/>
      <circle cx="81.500" cy="83" r="24.500" fill="#e8efe6"/><path d="M71 72c4-4 7-2 8 2 1 3-3 4-2 6 1 4 4 8 8 10 2 1 4-3 7-1 4 2 4 5 1 7-5 4-12 1-17-6-6-7-9-14-5-18Z" fill="#25c93c"/>` },
  { art: svg`${grad("it", "#fb5a58", "#22c6fb", 0.3, 1)}${grad("in", "#fb4f68", "#3f84f0")}
      <circle cx="58" cy="66" r="48" fill="url(#it)"/><path d="M11 75A48 48 0 0 1 22 34L58 66 28 103Q15 92 11 75Z" fill="#c35be0"/><circle cx="58" cy="66" r="43" fill="#f5f6f8"/>
      <path d="M43 42 79 34v46c0 6-4 9-9 9s-7-3-6-7c1-5 6-6 11-6V49L48 55v31c0 6-4 9-9 9s-7-3-6-7c1-5 6-6 10-6Z" fill="url(#in)"/>` },
  { badge: "2", art: svg`${grad("as", "#1cc6fc", "#1e60ee")}
      <circle cx="58" cy="66" r="47.500" fill="#e3e8ed"/><circle cx="58" cy="66" r="43.500" fill="url(#as)"/>
      <g fill="none" stroke="#f4f7fb" stroke-width="7" stroke-linecap="round"><path d="M63 40 44 73M54 40 81 85M31 73h34M77 73h8M40 82l-4 6"/></g>` },
  { art: svg`${grad("se", "#cbdbe3", "#858585")}
      <rect x="11" y="22" width="94" height="87" rx="5" fill="url(#se)"/><circle cx="58" cy="65.500" r="38" fill="#26282a"/>
      <circle cx="58" cy="65.500" r="31.500" fill="none" stroke="#9c9c9c" stroke-width="5" stroke-dasharray="3.400 2.200"/><circle cx="58" cy="65.500" r="26" fill="none" stroke="#b0b0b0" stroke-width="6"/>
      <path d="M58 65.500h26M58 65.500 45 43M58 65.500 45 88" stroke="#a8a8a8" stroke-width="6"/><circle cx="58" cy="65.500" r="5" fill="#8a8a8a"/>` },
  { run: true, art: svg`${grad("ex", "#35935f", "#1d6b41")}
      <rect x="60" y="29" width="46" height="74" fill="#f8f8f8"/><path d="M66 38h31v8H66z" fill="#3c3c3c"/>
      ${[50, 62, 74, 86].map((y) => svg`<path d="M66 ${y}h14v8H66zM83 ${y}h14v8H83z" fill="#5a9d7c"/>`)}
      <path d="M10 36 65 19v94L10 98Z" fill="url(#ex)"/><path d="M25 49l22 34M46 48 25 82" stroke="#fff" stroke-width="6"/>` },
  { art: svg`<path d="M17 26 86 16l14 87-69 11Z" fill="#c9c9cb"/><path d="M17 26 86 16l3 17-69 12Z" fill="#20292c"/><path d="M76 35 89 33l11 70-13 2Z" fill="#f07c22"/>
      <g stroke="#8b8b8d" stroke-width="1.200"><path d="M22 58l69-11M25 72l68-11M27 86l69-11M29 100l69-11M35 43l11 69M52 40l11 69M70 37l11 69"/></g>
      <g class="lcd"><text x="36" y="38" transform="rotate(-9 36 38)">3141593</text></g>
      <g class="keys"><text x="24" y="56" transform="rotate(-9 24 56)">AC</text><text x="27" y="69" transform="rotate(-9 27 69)">7</text><text x="44" y="67" transform="rotate(-9 44 67)">8</text><text x="61" y="64" transform="rotate(-9 61 64)">9</text><text x="29" y="83" transform="rotate(-9 29 83)">4</text><text x="46" y="80" transform="rotate(-9 46 80)">5</text><text x="63" y="77" transform="rotate(-9 63 77)">6</text><text x="31" y="96" transform="rotate(-9 31 96)">1</text><text x="48" y="94" transform="rotate(-9 48 94)">2</text><text x="65" y="91" transform="rotate(-9 65 91)">3</text><text x="34" y="110" transform="rotate(-9 34 110)">0</text></g>` },
  { art: svg`<path d="M20 23h78q4 0 4 4v58L78 109H20q-4 0-4-4V27q0-4 4-4Z" fill="#f3b32b"/><path d="M102 84 78 109V84Z" fill="#fbd98a"/>
      <path d="M51 80V73C35 64 36 39 59 39s24 25 8 34v7Z" fill="none" stroke="#fff" stroke-width="5"/><path d="M49 84h20v7H49zM53 92h12v4H53z" fill="#fff"/>` },
  { art: svg`<path d="M35 74 93 79v24l-56 5Z" fill="#f6ee9a"/><path d="M63 32l44 3-2 47-55-4Z" fill="#fcf29a"/><path d="M7 37 58 20 75 66 22 81Z" fill="#f8ef94"/>
      <g fill="none" stroke="#555" stroke-width="1.500"><path d="M20 71l42-13M24 74l34-11"/></g>
      <g class="ink"><text x="30" y="45" transform="rotate(-16 30 45)">Lou</text><text x="17" y="62" transform="rotate(-16 17 62)" class="big">555-7361</text><text x="71" y="60" class="red">Eggs</text><text x="50" y="94" class="blue">Milk</text></g>` },
  { badge: "2", art: svg`<path d="M24 26 80 17q5-1 5 4l14 75q1 5-4 6l-58 10q-5 0-5-4L19 31q0-4 5-5Z" fill="#fbfbfb"/>
      <path d="M43 41l34-6M46 58l36-6M48 75l38-6M51 92l38-6" stroke="#d0d0d0" stroke-width="1.500"/>
      <circle cx="31.500" cy="42" r="6" fill="#fc932a"/><circle cx="33.500" cy="59" r="6" fill="#2ba0f2"/><circle cx="36" cy="76" r="6" fill="#65d343"/><circle cx="38.500" cy="93" r="6" fill="#c16ade"/>` },
  { art: svg`<clipPath id="sl"><rect x="15" y="22" width="87" height="88" rx="5"/></clipPath><g clip-path="url(#sl)"><path d="M15 22h87v88H15z" fill="#f9f9f9"/>
      <path d="M15 22h56L15 53Z" fill="#9ad5dc"/><path d="M70 22h32v16l-25 1Z" fill="#93a63c"/><path d="M71 39 102 26v53L88 84Z" fill="#ecb23c"/><path d="M15 53 27 47 43 94 15 101Z" fill="#41a883"/><path d="M15 101l28-8 4 17H15Z" fill="#2b0b24"/><path d="M43 94 102 77v33H47Z" fill="#d6204a"/></g>
      <text x="58" y="83" class="slack">S</text>` },
  { art: svg`<rect x="11" y="19" width="93" height="94" rx="5" fill="#484848"/><path d="M85 31 31 49v19l22 7-22 7v19l54-18V65l-22-7 22-7Z" fill="#fb9726"/><path d="M53 75l32 7-3-17-19-7Z" fill="#e0801a" opacity=".5"/>` },
  { run: true, art: svg`${grad("ff", "#ff7a22", "#f5204f", 0, 1)}${grad("fy", "#fff04a", "#ff9a22", 0, 1)}${grad("fb", "#0f8df5", "#43117a")}
      <circle cx="58" cy="67" r="46" fill="#1487ee"/>
      <path d="M9 69C9 54 14 42 18 34l3-10c4 3 8 8 10 12 5-1 12-1 18 3-6 5 0 13-10 22-10 20 12 38 32 30l33-14c-4 24-22 40-46 40S9 97 9 69Z" fill="url(#ff)"/>
      <circle cx="61" cy="63" r="24" fill="url(#fb)"/><path d="M40 30c10-8 24-8 32-2l10 27-14 11-24-8Z" fill="#1685ee"/>
      <path d="M74 13c2 14 16 22 22 32l1-14c14 20 14 50 0 67-14 16-34 19-46 17 24-6 36-30 26-56-10-14-12-28-3-46Z" fill="url(#fy)"/>
      <path d="M35 60c9-4 9 8 18 9 6 0 12 2 14 8-12 12-26 6-32-17Z" fill="#fd9128"/>` },
  { run: true, art: svg`<circle cx="58" cy="66.500" r="49.500" fill="#fcc84a"/><path d="M58 66.500 15 42A49.500 49.500 0 0 1 101 43H58Z" fill="#d94b40"/><path d="M15 42a49.500 49.500 0 0 0 42 74l22-38-21-11Z" fill="#259c5a"/><path d="M58 43h43q6 11 6.500 23.500Q107 102 70 115L57 116l22-37Z" fill="#fcc84a"/>
      <circle cx="58" cy="66.500" r="23" fill="#f5f5f5"/><circle cx="58" cy="66.500" r="18.500" fill="#4a8af0"/>` },
  { run: true, art: svg`<rect x="12" y="24" width="92" height="83" rx="5" fill="#b9c3c4"/><rect x="14" y="26" width="88" height="79" rx="4" fill="#111"/><rect x="18" y="31" width="79" height="68" fill="#303030"/><text x="22" y="50" class="term">&gt;_</text>` },
  { art: svg`<rect x="12" y="24" width="92" height="83" rx="5" fill="#8fa5a4"/><rect x="13.500" y="26" width="89" height="79" rx="4" fill="#0b0d0c"/><rect x="18" y="32" width="79" height="68" fill="#17332d"/>
      <path d="M18 42h79M18 54h79M18 66h79M18 78h79M18 90h79M28 32v68M40 32v68M52 32v68M64 32v68M76 32v68M88 32v68" stroke="#2f574e" stroke-width="1.200"/>
      <path d="M18 71h15l3-5 3 7h8l4-34 5 43 4-13 4 2 3-8 4 0 4 10 5-5 4 4h11" fill="none" stroke="#82e6cf" stroke-width="1.800"/>` },
  { art: svg`${grad("di", "#7b8fd6", "#4259b2")}<circle cx="58" cy="66" r="47.500" fill="#f0f0f2"/><circle cx="58" cy="66" r="43" fill="url(#di)"/>
      <path d="M40 50c5-4 9-5 13-5l1 3h9l1-3c4 0 9 1 13 5 7 10 10 22 9 31-5 4-9 5-13 5l-4-5H47l-4 5c-4 0-8-1-13-5-1-9 3-22 10-31Z" fill="#fff"/><circle cx="50" cy="68" r="5" fill="#5469bd"/><circle cx="66.500" cy="68" r="5" fill="#5469bd"/>` },
  { run: true, art: svg`${grad("md", "#42dadb", "#1f86cc")}<circle cx="58" cy="66" r="47.500" fill="#f0f0f2"/><circle cx="58" cy="66" r="43" fill="url(#md)"/>
      <path d="M31 79V56l11 13 11-13v23" fill="none" stroke="#fff" stroke-width="8"/><path d="M79 53v14" stroke="#fff" stroke-width="8"/><path d="M67 64h24L79 79Z" fill="#fff"/>` },
  { run: true, art: svg`<rect x="12" y="20" width="92" height="92" fill="#f5f5f6"/>
      ${plus(58, 66, 14, "#3b7fb0", 4.5)}${[[39, 47], [77, 47], [39, 85], [77, 85]].map(([x, y]) => plus(x, y, 11, "#3b7fb0", 3.6))}${[[58, 35], [58, 97], [27, 66], [89, 66]].map(([x, y]) => plus(x, y, 7.5, "#3f7dab", 2.6))}` },
];

const stack = svg`<path d="M36 19c2-6 6-7 8-7l-1 7zM46 19c1-5 3-7 6-7v7zM54 12c12-1 22 1 24 7H62Z" fill="#4ab23a"/><path d="M17 18h82v8H17z" fill="#f47430"/><path d="M19 22h78" stroke="#7a3a16" stroke-width="1.500"/><rect x="12" y="24" width="92" height="89" fill="#f47430"/><rect x="15" y="27" width="86" height="82" fill="#30210a"/>
  <rect x="31" y="48" width="54" height="40" rx="2" fill="none" stroke="#f6c9a6" stroke-width="2"/><path d="M34 51h23v35H34zM59 51h13l10 10v25H59z" fill="#f47430"/><path d="M72 51l10 10H72z" fill="#fbd6bb"/>
  <path d="M38 60h16M38 65h16M38 70h16M38 75h16M38 80h16M63 60h9M63 65h16M63 70h16M63 75h16M63 80h16" stroke="#30210a" stroke-width="1.600"/>`;
const trash = svg`${grad("tr", "#d2d2d2", "#efefef")}<path d="M19 30q39 14 77 0L87 106q-2 8-29 8t-29-8Z" fill="url(#tr)"/><path d="M32 50q8 10 2 30t4 24M60 50q-8 16 2 28t-4 26M82 48q-6 20-2 30t-6 24" fill="none" stroke="#fff" stroke-width="3" opacity=".5"/>
  <path d="M20 30 28 22 36 26 44 14 52 24 64 15 72 24 84 19 96 30 84 37 58 39 32 37Z" fill="#eee"/><path d="M28 24l8 9 6-12zM48 20l8 14 5-12zM70 22l-4 12 12-4zM84 22l-4 11 10-4z" fill="#6b6b6b"/><path d="M44 24l7 3-4 4z" fill="#44bfc8"/><path d="M66 28l7 3-5 4z" fill="#a05636"/><path d="M19 30q39 16 77 0" fill="none" stroke="#f0f0f0" stroke-width="2"/>`;

@customElement("mac-dock")
class MacDock extends LitElement {
  static styles = [
    base,
    css`
      :host { height: 140px; background: linear-gradient(#2a2b2d, #47484a); padding: 0 130px; font-family: Inter, sans-serif; }
      .dock { width: 2620px; height: 140px; background: linear-gradient(#717073, #79797c 60%); border-radius: 14px 14px 0 0; display: flex; padding-left: 7.500px; }
      .app { width: 116.050px; height: 140px; position: relative; flex: none; }
      .line { width: 3px; height: 104px; background: #505052; margin: 18px 24px 0 25px; }
      .badge { position: absolute; left: 75px; top: 12px; width: 42px; height: 42px; border-radius: 50%; background: #f2403c; color: #fff; font-size: 24px; font-weight: 400; line-height: 42px; text-align: center; box-shadow: 0 1px 3px #0005; }
      .run { position: absolute; left: 54px; top: 128px; width: 8px; height: 8px; border-radius: 50%; background: #000; }
      .lcd { font: 13px "Liberation Sans", sans-serif; fill: #a9b8b4; }
      .keys { font: 8px "Liberation Sans", sans-serif; fill: #555; }
      .ink { font: italic 10px "Liberation Sans", sans-serif; fill: #444; }
      .ink .big { font-size: 11px; }
      .ink .red { fill: #d33; font-weight: 700; font-size: 12px; }
      .ink .blue { fill: #246; }
      .slack { font: 900 46px Lato, sans-serif; fill: #1c1a22; text-anchor: middle; }
      .term { font: 700 20px "Liberation Mono", monospace; fill: #fff; }
    `,
  ];
  render() {
    return html`<div class="dock">
      ${apps.map((a) => html`<div class="app">${ic(116, 140, a.art)}${a.badge ? html`<b class="badge">${a.badge}</b>` : nothing}${a.run ? html`<i class="run"></i>` : nothing}</div>`)}
      <i class="line"></i>
      <div class="app">${ic(116, 140, stack)}</div>
      <div class="app">${ic(116, 140, trash)}</div>
    </div>`;
  }
}

/* -------------------------------------------------------------------- root */

@customElement("app-root")
class AppRoot extends LitElement {
  static styles = [
    base,
    css`
      :host { width: 2880px; height: 1800px; overflow: hidden; background: #2b2c2e; }
      .window { margin-top: 2px; height: 1614px; background: #f5f5f5; border-radius: 10px; overflow: hidden; }
      .title { height: 44px; background: linear-gradient(#ebe9ec, #d0ced1); border-bottom: 2px solid #b3aeb4; display: grid; grid-template-columns: 300px 1fr 300px; align-items: center; justify-items: center; font: 26px Inter, sans-serif; color: #3b3b3d; }
      .lights { display: flex; gap: 16px; justify-self: start; padding-left: 16px; }
      .dot { width: 24px; height: 24px; border-radius: 50%; border: 1px solid #e0443e; background: #fc5f5b; }
      .dot.y { background: #fdbc40; border-color: #dfa035; }
      .dot.g { background: #33c748; border-color: #24a732; }
      .body { height: 1388px; display: flex; align-items: flex-start; gap: 12px; }
    `,
  ];
  render() {
    return html`
      <mac-menubar></mac-menubar>
      <div class="window">
        <div class="title">
          <span class="lights"><i class="dot"></i><i class="dot y"></i><i class="dot g"></i></span>
          ${t("Tableau Public - Book1", 273)}
        </div>
        <tool-bar></tool-bar>
        <div class="body">
          <data-pane></data-pane>
          <mark-cards></mark-cards>
          <work-sheet></work-sheet>
        </div>
        <sheet-tabs></sheet-tabs>
      </div>
      <mac-dock></mac-dock>
    `;
  }
}
